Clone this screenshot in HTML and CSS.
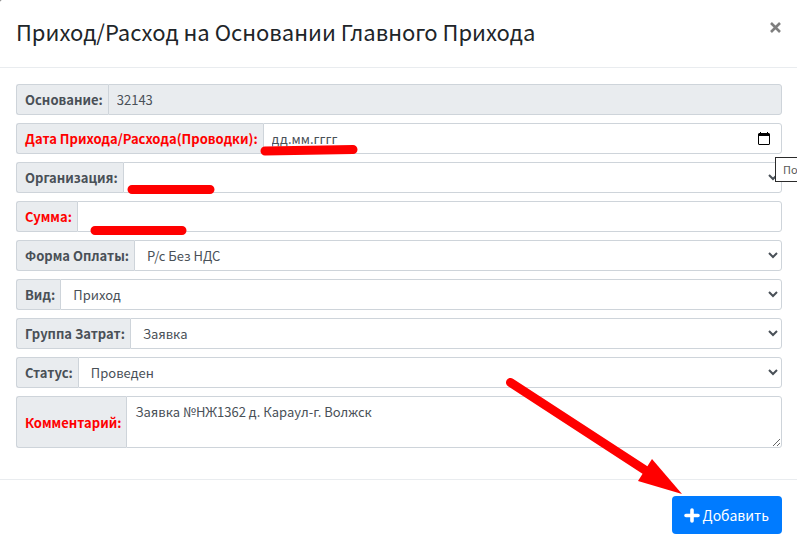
FILE: index.html
```html
<!DOCTYPE html>
<html lang="ru">
<head>
<meta charset="UTF-8">
<meta name="viewport" content="width=device-width, initial-scale=1.0">
<title>Приход/Расход</title>
<link rel="stylesheet" href="styles.css">
</head>
<body>
<div class="modal-content">
  <div class="modal-header">
    <h4 class="modal-title">Приход/Расход на Основании Главного Прихода</h4>
    <button type="button" class="close" aria-label="Закрыть">
      <svg width="11" height="11" viewBox="0 0 11 11"><path d="M1 1l9 9M10 1l-9 9" stroke="currentColor" stroke-width="2.6"/></svg>
    </button>
  </div>

  <form id="payForm">
    <div class="modal-body">
      <div class="input-group">
        <label class="input-group-text" for="base">Основание:</label>
        <input class="form-control" type="text" id="base" value="32143" readonly>
      </div>
      <div class="input-group">
        <label class="input-group-text required" for="payDate">Дата Прихода/Расхода(Проводки):</label>
        <div class="form-control date-control">
          <input class="date-input" type="text" id="payDate" placeholder="дд.мм.гггг">
          <button type="button" class="date-button" aria-label="Календарь">
            <svg width="12" height="13" viewBox="0 0 12 13"><path fill-rule="evenodd" d="M2 0h1v1h6V0h1v1h1l1 1v10l-1 1H1l-1-1V2l1-1h1zM1 4v8h10V4z"/></svg>
          </button>
        </div>
      </div>
      <div class="input-group">
        <label class="input-group-text" for="org">Организация:</label>
        <select class="form-control" id="org"><option></option></select>
      </div>
      <div class="input-group">
        <label class="input-group-text required" for="sum">Сумма:</label>
        <input class="form-control" type="text" id="sum">
      </div>
      <div class="input-group">
        <label class="input-group-text" for="payType">Форма Оплаты:</label>
        <select class="form-control" id="payType"><option>Р/с Без НДС</option></select>
      </div>
      <div class="input-group">
        <label class="input-group-text" for="kind">Вид:</label>
        <select class="form-control" id="kind"><option>Приход</option></select>
      </div>
      <div class="input-group">
        <label class="input-group-text" for="costGroup">Группа Затрат:</label>
        <select class="form-control" id="costGroup"><option>Заявка</option></select>
      </div>
      <div class="input-group">
        <label class="input-group-text" for="status">Статус:</label>
        <select class="form-control" id="status"><option>Проведен</option></select>
      </div>
      <div class="input-group">
        <label class="input-group-text required" for="comment">Комментарий:</label>
        <textarea class="form-control" id="comment" rows="2">Заявка №НЖ1362 д. Караул-г. Волжск</textarea>
      </div>
    </div>

    <div class="modal-footer">
      <button type="submit" class="btn-primary">
        <svg width="16" height="15" viewBox="0 0 16 15"><path d="M8 2v11M2 7.5h12" stroke="currentColor" stroke-width="3.6" stroke-linecap="round"/></svg>
        Добавить
      </button>
    </div>
  </form>

  <div class="tooltip">По</div>
  <svg class="marks" width="797" height="549" viewBox="0 0 797 549">
    <path d="M265 151L353 149.5M132 189.5H210M95 230.5H182" stroke-width="9" stroke-linecap="round"/>
    <path d="M510.5 382.500L648 472" stroke-width="9" stroke-linecap="round"/>
    <path d="M652 459L682 494L638 481z" stroke="none"/>
  </svg>
</div>
</body>
</html>
```
FILE: styles.css
```css
* {
  box-sizing: border-box;
}

body {
  margin: 0;
  background-color: #666;
  color: #212529;
  font-family: "Noto Sans CJK SC", "Noto Sans", sans-serif;
  font-size: 13px;
  line-height: 21px;
  overflow: hidden;
}

.modal-content {
  position: relative;
  min-height: 100vh;
  border-radius: 2px 0 0 0;
  background-color: #fff;
}

.modal-header {
  display: flex;
  justify-content: space-between;
  align-items: flex-start;
  padding: 16px 16px 20px;
  border-bottom: 1px solid #e9ecef;
}

.modal-title {
  margin: 0;
  font-size: 22px;
  font-weight: 400;
  line-height: 31px;
}

.close {
  display: flex;
  padding: 6px 0;
  border: 0;
  background: none;
  color: #7f7f7f;
  cursor: pointer;
}

.modal-body {
  padding: 16px 15px 23px 16px;
}

.input-group {
  display: flex;
  margin-bottom: 8px;
}

.input-group-text {
  display: flex;
  align-items: center;
  padding: 4px 5px 4px 8px;
  border: 1px solid #ced4da;
  border-right: 0;
  border-radius: 3px 0 0 3px;
  background-color: #e9ecef;
  color: #495057;
  font-weight: 700;
  white-space: nowrap;
}

.required {
  color: #f00;
}

.form-control {
  flex: 1;
  min-width: 0;
  height: 31px;
  padding: 4px 8px;
  border: 1px solid #ced4da;
  border-radius: 0 3px 3px 0;
  background-color: #fff;
  color: #495057;
  font-family: inherit;
  font-size: 13px;
  line-height: 21px;
}

.form-control[readonly] {
  background-color: #e9ecef;
}

textarea.form-control {
  height: 52px;
  resize: vertical;
}

.date-control {
  display: flex;
  align-items: center;
}

.date-input {
  flex: 1;
  min-width: 0;
  padding: 0;
  border: 0;
  outline: 0;
  font: inherit;
}

.date-input::placeholder {
  color: #495057;
}

.date-button {
  display: flex;
  padding: 0 3px;
  border: 0;
  background: none;
}

.modal-footer {
  display: flex;
  justify-content: flex-end;
  padding: 16px 15px 16px 16px;
  border-top: 1px solid #e9ecef;
}

.btn-primary {
  display: flex;
  align-items: center;
  gap: 3px;
  height: 38px;
  padding: 0 13px 0 12px;
  border: 0;
  border-radius: 4px;
  background-color: #007bff;
  color: #fff;
  font-family: inherit;
  font-size: 14px;
  cursor: pointer;
}

.tooltip {
  position: absolute;
  top: 157px;
  right: 0;
  width: 22px;
  height: 25px;
  padding-left: 7px;
  border: 1px solid #2b2b2b;
  border-right: 0;
  background-color: #fff;
  color: #575757;
  font-size: 11px;
  line-height: 23px;
}

.marks {
  position: absolute;
  top: 0;
  left: 0;
  fill: #f00;
  stroke: #f00;
  pointer-events: none;
}
```
